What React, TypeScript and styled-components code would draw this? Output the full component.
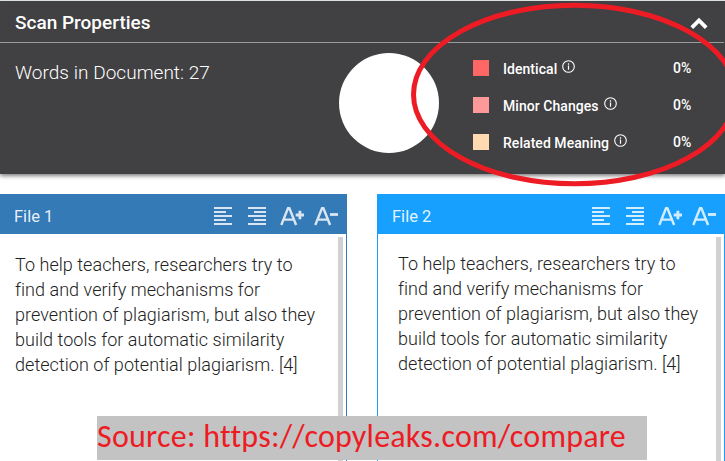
import React from "react";
import styled, { createGlobalStyle } from "styled-components";

const Global = createGlobalStyle`
  * { box-sizing: border-box; }
  body { margin: 0; background: #fff; overflow: hidden; font-family: Roboto, sans-serif; }
`;
const Page = styled.div`
  position: relative;
  width: 725px;
  height: 461px;
  overflow: hidden;
  padding-top: 1px;
  background: linear-gradient(#e8eded 1px, #fff 1px);
`;
const Summary = styled.section`
  height: 173px;
  background: #414042;
  color: #fff;
  box-shadow: 0 2px 4px rgba(0, 0, 0, 0.5);
`;
const SummaryHeader = styled.header`
  height: 42px;
  margin-right: 1px;
  padding: 1px 16px 0 15px;
  border-bottom: 1px solid #999b9b;
  display: flex;
  align-items: center;
  justify-content: space-between;
`;
const Title = styled.h1`
  margin: 0;
  padding-top: 1px;
  font-size: 19px;
  font-weight: 500;
  line-height: 24px;
  white-space: nowrap;
`;
const SummaryBody = styled.div`
  display: grid;
  grid-template-columns: 324px 134px 252px;
  padding: 10px 0 0 15px;
`;
const WordCount = styled.div`
  padding-top: 8px;
  font-size: 19px;
  font-weight: 300;
  letter-spacing: 0.04px;
  line-height: 24px;
  white-space: nowrap;
`;
const Pie = styled.div`
  width: 100px;
  height: 100px;
  border-radius: 50%;
  background: #fff;
`;
const Legend = styled.div`
  display: flex;
  flex-direction: column;
  gap: 21px;
  padding-top: 7px;
`;
const LegendRow = styled.div`
  display: flex;
  align-items: center;
  height: 16px;
  font-size: 14px;
  line-height: 16px;
  white-space: nowrap;
`;
const Swatch = styled.i<{ $color: string }>`
  width: 16px;
  height: 16px;
  margin-right: 14px;
  background: ${(p) => p.$color};
`;
const LegendName = styled.span`
  display: flex;
  width: 170px;
  gap: 5px;
  padding-top: 2px;
  font-weight: 500;
  letter-spacing: 0.05px;
  svg { margin-top: -1px; }
`;
const Percent = styled.span`
  font-weight: 500;
`;
const Files = styled.main`
  display: grid;
  grid-template-columns: 347px 348px;
  column-gap: 30px;
  height: 267px;
  margin-top: 20px;
`;
const FilePanel = styled.section<{ $color: string; $first?: boolean }>`
  border: 0 solid ${(p) => p.$color};
  border-right-width: 1px;
  border-left-width: ${(p) => (p.$first ? 0 : 1)}px;
`;
const FileHeader = styled.header<{ $color: string }>`
  display: flex;
  align-items: center;
  justify-content: space-between;
  height: 40px;
  padding: 3px 9px 0 14px;
  background: ${(p) => p.$color};
  color: rgba(255, 255, 255, 0.9);
  font-size: 16.5px;
`;
const FileName = styled.span`
  padding-top: 2px;
  line-height: 24px;
`;
const Tools = styled.div`
  display: flex;
  gap: 10px;
  height: 24px;
`;
const FileBody = styled.div<{ $first?: boolean }>`
  display: flex;
  justify-content: space-between;
  height: 227px;
  padding: 3px 3px 0 ${(p) => (p.$first ? 15 : 20)}px;
`;
const Text = styled.p<{ $first?: boolean }>`
  margin: 0;
  padding-top: ${(p) => (p.$first ? 15 : 14)}px;
  color: #222;
  font-size: 18px;
  font-weight: 300;
  letter-spacing: 0.04px;
  line-height: 25px;
  white-space: nowrap;
`;
const Scrollbar = styled.div`
  width: 5px;
  background: #d1d1d1;
`;
const Source = styled.div`
  position: absolute;
  left: 97px;
  top: 416px;
  width: 550px;
  height: 44px;
  background: #c3c3c3;
  color: #ed1c24;
  font-family: Carlito, Lato, sans-serif;
  font-size: 32px;
  font-variant-ligatures: none;
  letter-spacing: 0.23px;
  line-height: 42px;
  white-space: nowrap;
`;
const Highlight = styled.svg`
  position: absolute;
  left: 0;
  top: 0;
  pointer-events: none;
`;

const Info = () => (
  <svg width="13" height="13" viewBox="0 0 13 13" fill="none" stroke="#fff">
    <circle cx="6.5" cy="6.5" r="5.8" strokeWidth="1.1" />
    <path d="M6.5 5.6V9.8M6.5 3.3V4.7" strokeWidth="1.2" />
  </svg>
);
const AlignIcon = ({ right }: { right?: boolean }) => (
  <svg width="24" height="24" fill="currentColor" opacity="0.9">
    <path
      d={
        right
          ? "M3 3h18v2H3zM9 7h12v2H9zM3 11h18v2H3zM9 15h12v2H9zM3 19h18v2H3z"
          : "M3 3h18v2H3zM3 7h12v2H3zM3 11h18v2H3zM3 15h12v2H3zM3 19h18v2H3z"
      }
    />
  </svg>
);
const SizeIcon = ({ plus }: { plus?: boolean }) => (
  <svg width="24" height="24" viewBox="-1 0 24 24" overflow="visible" fill="none" stroke="currentColor" opacity="0.9">
    <path d="M1.3 21L8 4.2h1.4L16.1 21M4.2 15.6h9" strokeWidth="2.4" />
    <path d={plus ? "M15.7 11h8.3M19.9 6.8v8.4" : "M16 10.5h8"} strokeWidth="2.8" />
  </svg>
);

const legend = [
  { name: "Identical", color: "#ff6666" },
  { name: "Minor Changes", color: "#ff9999" },
  { name: "Related Meaning", color: "#ffd9b0" },
];
const lines = [
  "To help teachers, researchers try to",
  "find and verify mechanisms for",
  "prevention of plagiarism, but also they",
  "build tools for automatic similarity",
  "detection of potential plagiarism. [4]",
];

function File({ name, color, first }: { name: string; color: string; first?: boolean }) {
  return (
    <FilePanel $color={color} $first={first}>
      <FileHeader $color={color}>
        <FileName>{name}</FileName>
        <Tools>
          <AlignIcon />
          <AlignIcon right />
          <SizeIcon plus />
          <SizeIcon />
        </Tools>
      </FileHeader>
      <FileBody $first={first}>
        <Text $first={first}>
          {lines.map((line) => (
            <React.Fragment key={line}>
              {line}
              <br />
            </React.Fragment>
          ))}
        </Text>
        <Scrollbar />
      </FileBody>
    </FilePanel>
  );
}

export default function App() {
  return (
    <Page>
      <Global />
      <Summary>
        <SummaryHeader>
          <Title>Scan Properties</Title>
          <svg width="18" height="14" fill="none" stroke="#fff" strokeWidth="3.8">
            <path d="M1.8 12.7L9 5.5L16.2 12.7" />
          </svg>
        </SummaryHeader>
        <SummaryBody>
          <WordCount>Words in Document: 27</WordCount>
          <Pie />
          <Legend>
            {legend.map((item) => (
              <LegendRow key={item.name}>
                <Swatch $color={item.color} />
                <LegendName>
                  {item.name}
                  <Info />
                </LegendName>
                <Percent>0%</Percent>
              </LegendRow>
            ))}
          </Legend>
        </SummaryBody>
      </Summary>
      <Files>
        <File name="File 1" color="#337ab7" first />
        <File name="File 2" color="#18a0ff" />
      </Files>
      <Source>Source: https://copyleaks.com/compare</Source>
      <Highlight width="725" height="200" fill="none" stroke="#ed1c24" strokeWidth="5">
        <ellipse cx="574.5" cy="94.5" rx="161" ry="89.3" />
      </Highlight>
    </Page>
  );
}
